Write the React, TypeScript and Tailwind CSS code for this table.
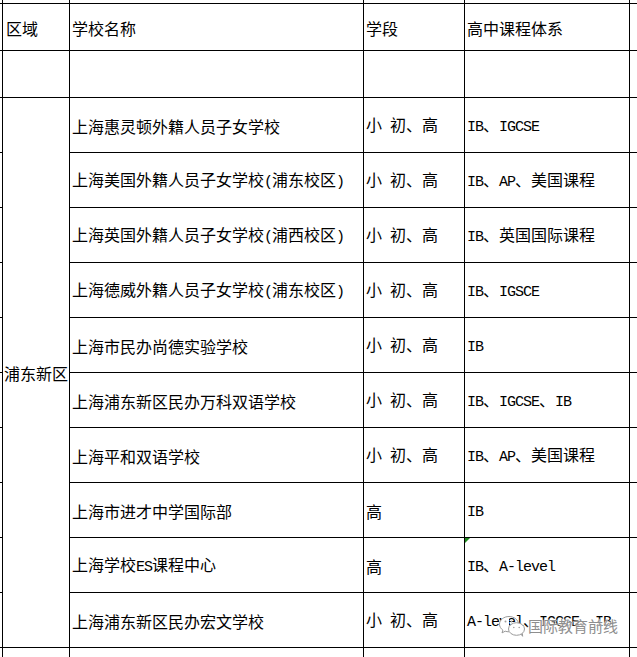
import type { ReactNode } from "react"

type School = { name: string; stage: string; course: string; flag?: boolean }

const schools: School[] = [
  { name: "上海惠灵顿外籍人员子女学校", stage: "小 初、高", course: "IB、IGCSE" },
  { name: "上海美国外籍人员子女学校(浦东校区)", stage: "小 初、高", course: "IB、AP、美国课程" },
  { name: "上海英国外籍人员子女学校(浦西校区)", stage: "小 初、高", course: "IB、英国国际课程" },
  { name: "上海德威外籍人员子女学校(浦东校区)", stage: "小 初、高", course: "IB、IGSCE" },
  { name: "上海市民办尚德实验学校", stage: "小 初、高", course: "IB" },
  { name: "上海浦东新区民办万科双语学校", stage: "小 初、高", course: "IB、IGCSE、IB" },
  { name: "上海平和双语学校", stage: "小 初、高", course: "IB、AP、美国课程" },
  { name: "上海市进才中学国际部", stage: "高", course: "IB" },
  { name: "上海学校ES课程中心", stage: "高", course: "IB、A-level", flag: true },
  { name: "上海浦东新区民办宏文学校", stage: "小 初、高", course: "A-level、IGCSE、IB" },
]

// ascii runs are half width (8px), cjk runs full width (16px), like the sheet's font
function Txt({ text }: { text: string }) {
  const parts = text.match(/[\x20-\x7e]+|[^\x20-\x7e]+/g) ?? []
  return (
    <span className="whitespace-pre leading-[16px] text-black">
      {parts.map((p, i) =>
        /^[\x20-\x7e]/.test(p) ? (
          <span key={i} className="font-['Liberation_Mono',monospace] text-[15px] tracking-[-1px]">
            {p}
          </span>
        ) : (
          <span key={i} className="font-['Noto_Sans_CJK_SC','Noto_Sans',sans-serif] text-[16px]">
            {p}
          </span>
        ),
      )}
    </span>
  )
}

function Row({ h, cells }: { h: string; cells?: ReactNode[] }) {
  const c = cells ?? []
  return (
    <div className={`flex border-b border-black ${h}`}>
      <div className="w-[3px] shrink-0 border-r border-black" />
      <div className="w-[67px] shrink-0 border-r border-black flex items-center pl-[3px] pt-[2px]">{c[0]}</div>
      <div className="w-[294px] shrink-0 border-r border-black flex items-center pl-[2px] pt-[2px]">{c[1]}</div>
      <div className="w-[101px] shrink-0 border-r border-black flex items-center pl-[2px] pt-[2px]">{c[2]}</div>
      <div className="w-[165px] shrink-0 border-r border-black flex items-center pl-[2px] pt-[2px]">{c[3]}</div>
      <div className="flex-1" />
    </div>
  )
}

function WeChatIcon() {
  return (
    <svg width="28" height="22" viewBox="0 0 28 22" fill="none">
      <path
        d="M11 1.5C5.8 1.5 1.5 5 1.5 9.2c0 2.4 1.3 4.5 3.4 5.9l-0.9 2.8 3.2-1.7c1.2 0.4 2.4 0.6 3.8 0.6"
        stroke="#9a9a9a"
        strokeWidth="1"
        fill="#fff"
      />
      <path d="M11 1.5c5.2 0 9.5 3.5 9.5 7.7" stroke="#9a9a9a" strokeWidth="1" />
      <ellipse cx="18.5" cy="14" rx="8" ry="6.3" stroke="#9a9a9a" strokeWidth="1" fill="#fff" />
      <path d="M23 19l1.6 2.3-0.2-3" stroke="#9a9a9a" strokeWidth="1" fill="#fff" />
      <circle cx="7.5" cy="6.5" r="1" fill="#a0a0a0" />
      <circle cx="13.5" cy="6.5" r="1" fill="#a0a0a0" />
      <circle cx="15.8" cy="12.5" r="0.8" fill="#a0a0a0" />
      <circle cx="21.2" cy="12.5" r="0.8" fill="#a0a0a0" />
    </svg>
  )
}

export default function App() {
  return (
    <div className="relative w-[637px] h-[657px] overflow-hidden bg-white">
      <Row h="h-[4px]" />
      <Row h="h-[47px]" cells={[<Txt text="区域" />, <Txt text="学校名称" />, <Txt text="学段" />, <Txt text="高中课程体系" />]} />
      <Row h="h-[47px]" />

      <div className="flex">
        <div className="w-[3px] shrink-0 flex flex-col">
          {schools.map((s) => (
            <div key={s.name} className="h-[55px] border-r border-b border-black" />
          ))}
        </div>
        <div className="w-[67px] h-[550px] shrink-0 border-r border-b border-black flex items-center justify-center pt-[2px]">
          <Txt text="浦东新区" />
        </div>
        <div className="flex-1 flex flex-col">
          {schools.map((s) => (
            <div key={s.name} className="flex h-[55px] border-b border-black">
              <div className="w-[294px] shrink-0 border-r border-black flex items-center pl-[2px] pt-[2px]">
                <Txt text={s.name} />
              </div>
              <div className="w-[101px] shrink-0 border-r border-black flex items-center pl-[2px] pt-[2px]">
                <Txt text={s.stage} />
              </div>
              <div className="relative w-[165px] shrink-0 border-r border-black flex items-center pl-[2px] pt-[2px]">
                {s.flag && (
                  <svg className="absolute left-0 top-0" width="5" height="5" viewBox="0 0 5 5">
                    <polygon points="0,0 5,0 0,5" fill="#1d8a1d" />
                  </svg>
                )}
                <Txt text={s.course} />
              </div>
              <div className="flex-1" />
            </div>
          ))}
        </div>
      </div>

      <Row h="h-[20px]" />

      {/* watermark */}
      <div className="absolute left-[498px] top-[615px] flex items-center gap-[2px]">
        <WeChatIcon />
        <span className="font-['Noto_Sans_CJK_SC',sans-serif] text-[15px] leading-[18px] text-[#8e8e8e] [text-shadow:0_0_1px_#fff,0_0_2px_#fff,0_0_3px_#fff]">
          国际教育前线
        </span>
      </div>
    </div>
  )
}
